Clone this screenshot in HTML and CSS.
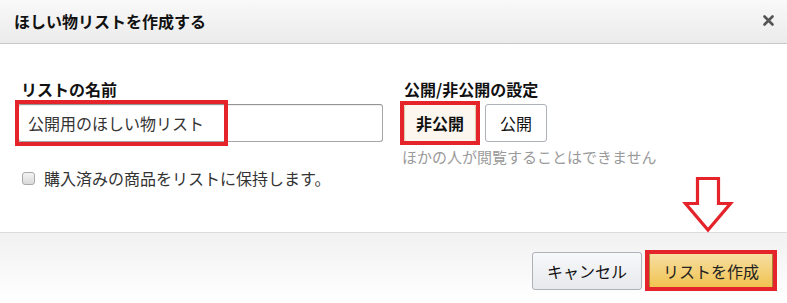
FILE: index.html
```html
<!DOCTYPE html>
<html lang="ja">
<head>
<meta charset="utf-8">
<link rel="stylesheet" href="styles.css">
</head>
<body>
<div class="dialog">
  <div class="header">
    <h1 class="title">ほしい物リストを作成する</h1>
    <svg class="close" width="11" height="11" viewBox="0 0 11 11"><path d="M1.5 1.5 L9.5 9.5 M9.5 1.5 L1.5 9.5" stroke="#555" stroke-width="2.6" stroke-linecap="round"/></svg>
  </div>
  <div class="content">
    <div class="col-left">
      <div class="label">リストの名前</div>
      <div class="field">
        <div class="input">公開用のほしい物リスト</div>
        <span class="mark mark-input"></span>
      </div>
      <label class="check-row">
        <input type="checkbox" class="check">
        <span>購入済みの商品をリストに保持します。</span>
      </label>
    </div>
    <div class="col-right">
      <div class="label label-right">公開/非公開の設定</div>
      <div class="toggle">
        <div class="field">
          <div class="btn-opt selected">非公開</div>
          <span class="mark mark-opt"></span>
        </div>
        <div class="btn-opt">公開</div>
      </div>
      <div class="hint">ほかの人が閲覧することはできません</div>
    </div>
  </div>
  <div class="footer">
    <div class="btn btn-cancel">キャンセル</div>
    <div class="field">
      <div class="btn btn-create">リストを作成</div>
      <span class="mark mark-create"></span>
    </div>
  </div>
  <svg class="arrow" width="56" height="62" viewBox="680 174 56 62"><path d="M697.5 178.5 H718.5 V203.5 H730.5 L708 230 L685.5 203.5 H697.5 Z" fill="none" stroke="#e5232b" stroke-width="3.2" stroke-linejoin="miter"/></svg>
</div>
</body>
</html>
```
FILE: styles.css
```css
* { box-sizing: border-box; }
body {
  margin: 0;
  font-family: "Noto Sans CJK JP", "Noto Sans", sans-serif;
  color: #111;
  background: #fff;
}
.dialog {
  position: relative;
  width: 787px;
  height: 303px;
  display: flex;
  flex-direction: column;
  background: #fff;
}
.header {
  height: 44px;
  flex: none;
  display: flex;
  align-items: center;
  justify-content: space-between;
  padding: 0 13px 2px 14px;
  background: linear-gradient(#f9f9f9, #ebebeb);
  border-bottom: 1px solid #c8c8c8;
}
.title {
  margin: 0;
  font-size: 16px;
  font-weight: 700;
  line-height: 18px;
  color: #111;
}
.close { display: block; }
.content {
  flex: 1;
  display: flex;
  gap: 17px;
  padding: 36px 0 0 18px;
}
.col-left { width: 365px; display: flex; flex-direction: column; }
.col-right { display: flex; flex-direction: column; }
.label {
  font-size: 16px;
  font-weight: 700;
  line-height: 18px;
  padding-left: 3px;
  margin-bottom: 6px;
  color: #111;
}
.label-right { padding-left: 4px; }
.field { position: relative; }
.input {
  height: 38px;
  border: 1px solid #a6a6a6;
  border-top-color: #949494;
  border-radius: 3px;
  padding: 0 0 0 9px;
  font-size: 16px;
  line-height: 36px;
  color: #333;
  box-shadow: inset 0 1px 0 rgba(0,0,0,0.06);
}
.mark {
  position: absolute;
  border: 4px solid #e5232b;
  pointer-events: none;
}
.mark-input { left: -3px; top: -4px; width: 213px; height: 46px; }
.mark-opt { left: 0; top: -3px; width: 80px; height: 44px; }
.mark-create { left: -4px; top: -2px; width: 132px; height: 41px; }
.check-row {
  display: flex;
  align-items: center;
  gap: 9px;
  margin-top: 26px;
  padding-left: 4px;
  font-size: 16px;
  line-height: 20px;
  color: #333;
}
.check {
  appearance: none;
  -webkit-appearance: none;
  margin: 0;
  width: 13px;
  height: 13px;
  border: 1px solid #a9a9a9;
  border-radius: 3px;
  background: linear-gradient(#f4f4f4, #d9d9d9);
}
.toggle { display: flex; gap: 9px; }
.btn-opt {
  height: 38px;
  width: 62px;
  text-align: center;
  border: 1px solid #adb1b8;
  border-radius: 3px;
  font-size: 16px;
  line-height: 36px;
  color: #111;
  background: #fff;
}
.btn-opt.selected {
  margin-left: 4px;
  width: 72px;
  font-weight: 700;
  background: #fcf6ef;
  border-color: #e0c9a8;
}
.hint {
  margin-top: 6px;
  padding-left: 2px;
  font-size: 15px;
  line-height: 18px;
  color: #9a9a9a;
}
.footer {
  height: 71px;
  flex: none;
  display: flex;
  justify-content: flex-end;
  align-items: flex-start;
  gap: 7px;
  padding: 19px 14px 0 0;
  border-top: 1px solid #dcdcdc;
  background: linear-gradient(#f1f1f1, #ffffff);
}
.btn {
  height: 38px;
  border-radius: 3px;
  font-size: 16px;
  line-height: 36px;
  text-align: center;
  color: #111;
}
.btn-cancel {
  width: 110px;
  border: 1px solid #adb1b8;
  background: linear-gradient(#f7f8fa, #e7e9ec);
}
.btn-create {
  width: 124px;
  border: 1px solid #a88734;
  background: linear-gradient(#f7dfa5, #f0c14b);
  color: #222;
}
.arrow {
  position: absolute;
  left: 680px;
  top: 174px;
}
```
